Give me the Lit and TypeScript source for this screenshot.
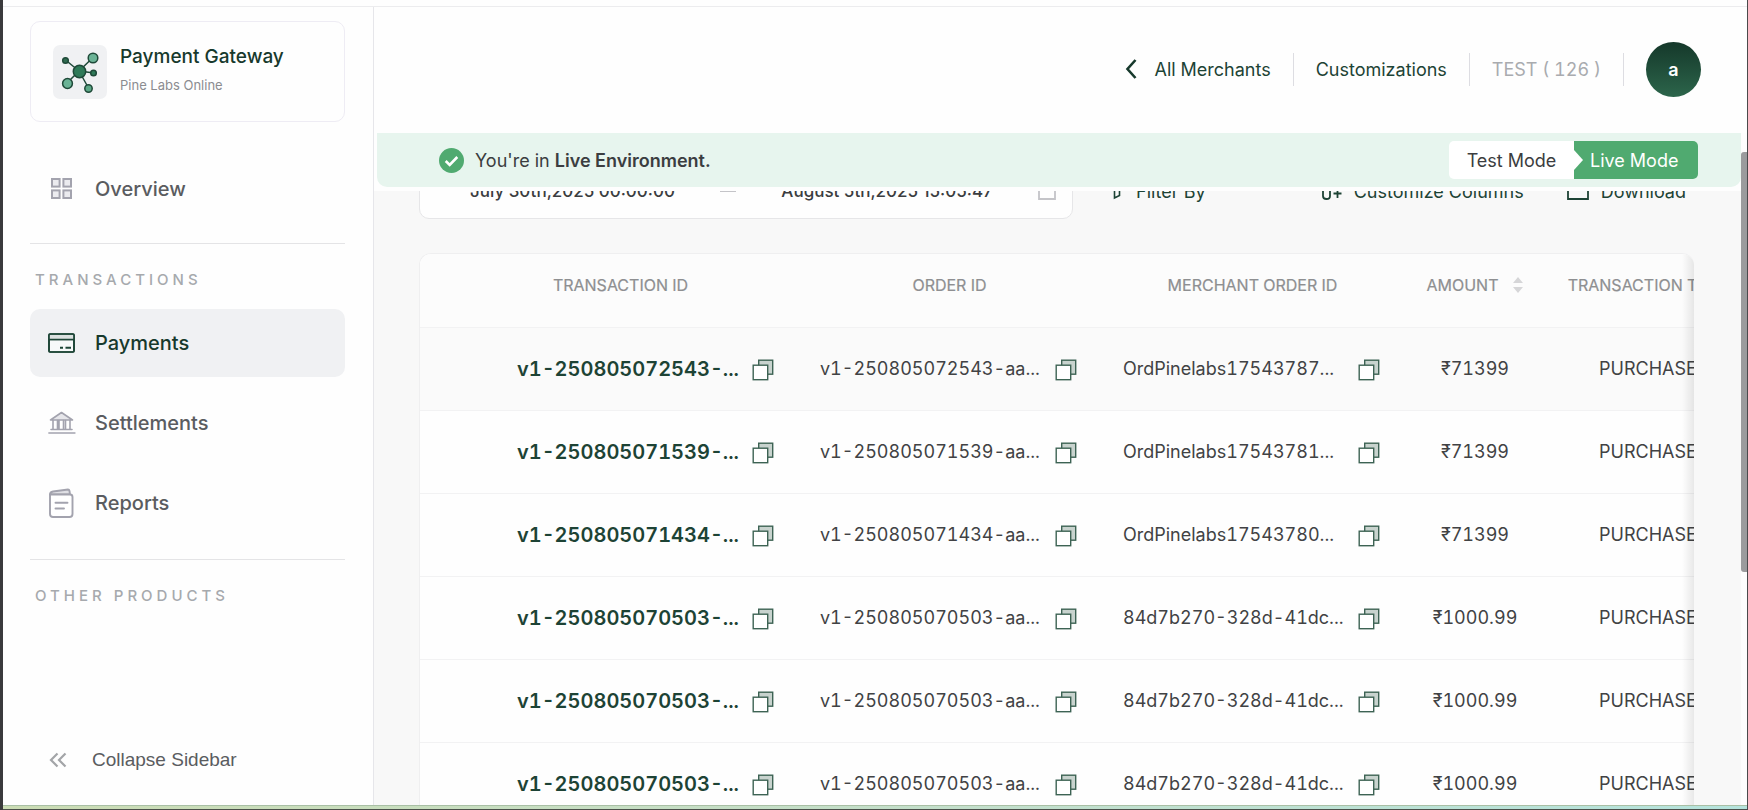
import { LitElement, html, css } from "lit";
import { customElement, state } from "lit/decorators.js";

interface Payment {
  id: string;
  order: string;
  merchantOrder: string;
  amount: string;
  type: string;
}

const PAYMENTS: Payment[] = [
  { id: "v1-250805072543-...", order: "v1-250805072543-aa...", merchantOrder: "OrdPinelabs17543787...", amount: "₹71399", type: "PURCHASE" },
  { id: "v1-250805071539-...", order: "v1-250805071539-aa...", merchantOrder: "OrdPinelabs17543781...", amount: "₹71399", type: "PURCHASE" },
  { id: "v1-250805071434-...", order: "v1-250805071434-aa...", merchantOrder: "OrdPinelabs17543780...", amount: "₹71399", type: "PURCHASE" },
  { id: "v1-250805070503-...", order: "v1-250805070503-aa...", merchantOrder: "84d7b270-328d-41dc...", amount: "₹1000.99", type: "PURCHASE" },
  { id: "v1-250805070503-...", order: "v1-250805070503-aa...", merchantOrder: "84d7b270-328d-41dc...", amount: "₹1000.99", type: "PURCHASE" },
  { id: "v1-250805070503-...", order: "v1-250805070503-aa...", merchantOrder: "84d7b270-328d-41dc...", amount: "₹1000.99", type: "PURCHASE" },
];

const reset = css`
  * { box-sizing: border-box; }
  button { font: inherit; color: inherit; background: none; border: 0; padding: 0; margin: 0; cursor: pointer; }
  a { color: inherit; text-decoration: none; }
  svg { display: block; flex: none; }
`;

const overviewIcon = html`<svg width="28" height="28" viewBox="0 0 28 28" fill="#ebebef" stroke="#a3a3ae" stroke-width="2">
  <rect x="4" y="4" width="7.600" height="7.600"/><rect x="15.400" y="4" width="7.600" height="7.600"/>
  <rect x="4" y="15.400" width="7.600" height="7.600"/><rect x="15.400" y="15.400" width="7.600" height="7.600"/></svg>`;
const cardIcon = html`<svg width="28" height="28" viewBox="0 0 28 28" fill="none" stroke="#1d4536" stroke-width="1.7">
  <rect x="1" y="5" width="25" height="18" rx="1.2" fill="#f7f9f9"/>
  <path d="M1 10.5h25v-4.500H1z" fill="#dbe1df" stroke="none"/><path d="M1 10.600h25"/><rect x="1" y="5" width="25" height="18" rx="1.2"/>
  <path d="M12 18.700h3M17.500 18.700h5.500" stroke-width="1.900"/></svg>`;
const bankIcon = html`<svg width="28" height="28" viewBox="0 0 28 28" fill="none" stroke="#a3a3ae" stroke-width="1.6" stroke-linecap="round" stroke-linejoin="round">
  <path d="M2.500 11 13.500 3.500 24.500 11z" fill="#e6e6ea"/><path d="M5 11.500v8.500M9.500 11.500v8.500M11 11.500v8.500M15.500 11.500v8.500M17.500 11.500v8.500M22 11.500v8.500M3 20.500h21M.900 24h26"/></svg>`;
const reportIcon = html`<svg width="28" height="30" viewBox="0 0 28 30" fill="none" stroke="#a3a3ae" stroke-width="1.9" stroke-linecap="round" stroke-linejoin="round">
  <path d="M2 6.500C2 4.500 3 3.800 5 3.500L20 1.500q1.200 0 1.500 1.500L22 6.500z" fill="#e0e0e5"/>
  <path d="M2 6.500H22Q24.500 6.500 24.500 9V26Q24.500 29 21.500 29H5Q2 29 2 26z" fill="#fff"/><path d="M7.500 14.800h12M7.500 20.500h8.500"/></svg>`;
const networkIcon = html`<svg width="54" height="54" viewBox="0 0 54 54" stroke="#1f4a39" stroke-width="1.5">
  <path d="M26 26 12.500 15M26 26 40 12.500M26 26l15 2M26 26 14 38M26 26l9.500 17"/>
  <circle cx="26.500" cy="26.500" r="6.200" fill="#2f7a58"/><circle cx="12.500" cy="15.500" r="2.800" fill="#2f6b50"/>
  <circle cx="40" cy="13" r="4.800" fill="#6bb396"/><circle cx="40.500" cy="28" r="2.800" fill="#2f7a58"/>
  <circle cx="14.500" cy="38.500" r="4.900" fill="#6bb396"/><circle cx="35.500" cy="43.500" r="3.700" fill="#5da887"/></svg>`;
const copyIcon = html`<svg width="22" height="22" viewBox="0 0 22 22" stroke="#3d6354" stroke-width="1.4">
  <rect x="6.700" y="1.200" width="14" height="14" fill="#c8d3ce"/><rect x="1.200" y="6.200" width="14.500" height="14.500" fill="#fff"/></svg>`;

@customElement("side-nav")
class SideNav extends LitElement {
  @state() private active = "Payments";

  static styles = [reset, css`
    :host { display: flex; flex-direction: column; padding: 14px 28px 22px 27px; border-right: 1px solid #e6e6ea; background: #fefefe; color: #5a5c60; }
    .product { display: flex; align-items: center; gap: 13px; height: 101px; padding: 0 22px; border: 1px solid #eeecf4; border-radius: 10px; }
    .tile { border-radius: 7px; background: #f0f1f3; }
    .names { display: flex; flex-direction: column; gap: 8px; padding-bottom: 6px; }
    .name { font-size: 19px; line-height: 24px; font-weight: 500; color: #17392c; white-space: nowrap; }
    .company { font-size: 13px; line-height: 16px; color: #8b8c90; }
    .overview { margin: 33px 0 20px; }
    .item { display: flex; align-items: center; gap: 19px; width: 100%; height: 68px; padding: 0 17px; border-radius: 10px; font-size: 20px; font-weight: 500; }
    .icon { display: flex; justify-content: center; width: 29px; }
    .active { background: #f0f1f3; color: #17392c; }
    .section { margin: 0; padding: 27px 5px 20px; border-top: 1px solid #e4e4e6; font-size: 15px; line-height: 18px; font-weight: 500; letter-spacing: 4px; color: #a6a9ad; }
    .group { display: flex; flex-direction: column; gap: 12px; padding-bottom: 22px; }
    .collapse { display: flex; align-items: center; gap: 24px; margin-top: auto; padding: 0 18px; font: 19px/46px "Liberation Sans", Arial, sans-serif; }
  `];

  private item(label: string, icon: unknown) {
    return html`<a href="#" class="item ${this.active === label ? "active" : ""}"
      @click=${(e: Event) => { e.preventDefault(); this.active = label; }}><span class="icon">${icon}</span>${label}</a>`;
  }

  render() {
    return html`
      <div class="product">
        <div class="tile">${networkIcon}</div>
        <div class="names"><span class="name">Payment Gateway</span><span class="company">Pine Labs Online</span></div>
      </div>
      <div class="overview">${this.item("Overview", overviewIcon)}</div>
      <h2 class="section">TRANSACTIONS</h2>
      <nav class="group">
        ${this.item("Payments", cardIcon)}
        ${this.item("Settlements", bankIcon)}
        ${this.item("Reports", reportIcon)}
      </nav>
      <h2 class="section">OTHER PRODUCTS</h2>
      <button class="collapse">
        <svg width="20" height="18" viewBox="0 0 20 18" fill="none" stroke="#a3a5a8" stroke-width="2.2"><path d="M9.500 2.500 3 9l6.500 6.500M17.500 2.500 11 9l6.500 6.500"/></svg>
        Collapse Sidebar
      </button>`;
  }
}

@customElement("payments-table")
class PaymentsTable extends LitElement {
  static styles = [reset, css`
    :host { display: block; position: relative; overflow: hidden; border: 1px solid #efeff0; border-right: 0; border-radius: 12px 12px 0 0; background: #fefefe; }
    .edge { position: absolute; inset: 0 0 0 auto; width: 12px; background: linear-gradient(to right, #0000, #00000016); }
    .table { width: 100%; min-width: 1322px; table-layout: fixed; border-collapse: collapse; font-size: 18px; font-variant-numeric: tabular-nums; color: #414244; }
    .c-id { width: 378px; }
    .c-order { width: 303px; }
    .c-amount { width: 142px; }
    .table th { height: 73px; padding: 0 0 11px; background: #fcfcfc; font-size: 16px; font-weight: 400; color: #8e8f91; -webkit-text-stroke: 0.2px; white-space: nowrap; }
    .table th:first-child { padding-left: 23px; }
    .table td { height: 83px; padding: 0; border-top: 1px solid #f2f2f3; text-align: center; white-space: nowrap; }
    .table th:last-child, .table td:last-child { padding-left: 8px; }
    .table tbody tr:first-child td { background: #fafafa; }
    .cell { display: flex; align-items: center; justify-content: space-between; padding: 0 24px 0 22px; }
    .table td:first-child .cell { padding-left: 97px; }
    .id { font-size: 20px; font-weight: 600; color: #1d4335; }
    .sort { display: inline-flex; align-items: center; gap: 13px; }
    .copy { padding-top: 2px; }
  `];

  render() {
    const copy = html`<button class="copy" aria-label="Copy">${copyIcon}</button>`;
    return html`
      <table class="table">
        <colgroup><col class="c-id"><col class="c-order"><col class="c-order"><col class="c-amount"><col></colgroup>
        <thead><tr>
          <th>TRANSACTION ID</th><th>ORDER ID</th><th>MERCHANT ORDER ID</th>
          <th><button class="sort">AMOUNT
            <svg width="12" height="18" viewBox="0 0 12 18" fill="#d6d6d8"><path d="M6 1 11 7H1zM6 17l5-6H1z"/></svg></button></th>
          <th>TRANSACTION TYPE</th>
        </tr></thead>
        <tbody>${PAYMENTS.map((p) => html`<tr>
          <td><div class="cell"><a class="id" href="#">${p.id}</a>${copy}</div></td>
          <td><div class="cell"><span>${p.order}</span>${copy}</div></td>
          <td><div class="cell"><span>${p.merchantOrder}</span>${copy}</div></td>
          <td>${p.amount}</td>
          <td>${p.type}</td>
        </tr>`)}</tbody>
      </table>
      <div class="edge"></div>`;
  }
}

@customElement("app-root")
class AppRoot extends LitElement {
  static styles = [reset, css`
    :host { display: flex; flex-direction: column; height: 100vh; overflow: hidden; border-left: 3px solid #3a3a3c; border-right: 1px solid #4a4a4c; background: #fefefe; font-family: Inter, "Liberation Sans", sans-serif; font-size: 18px; color: #3b3d40; }
    .shell { flex: 1; min-height: 0; display: grid; grid-template-columns: 371px minmax(0, 1fr); margin-top: 6px; border-top: 1px solid #ececee; }
    .strip { height: 5px; border-top: 1px solid #a9bfa5; border-bottom: 1px solid #4b4f4a; background: linear-gradient(to right, #cbdcb4, #c3dfcb 55%, #b5e3dc); }
    .main { display: flex; flex-direction: column; min-width: 0; min-height: 0; }
    .top { display: flex; align-items: center; justify-content: flex-end; height: 126px; flex: none; padding: 0 46px 2px 0; font-variant-numeric: tabular-nums; color: #1d4335; }
    .back { display: flex; align-items: center; gap: 18px; }
    .top a { padding-right: 22px; }
    .rule { align-self: center; width: 1px; height: 33px; margin-right: 22px; background: #dddde2; }
    .merchant { padding-right: 22px; color: #a9abaf; }
    .avatar { width: 55px; height: 55px; border-radius: 50%; background: linear-gradient(#15382a, #2c654b); color: #fff; font-weight: 600; }
    .body { flex: 1; min-height: 0; display: grid; grid-template-columns: minmax(0, 1fr) 6px; }
    .view { display: flex; flex-direction: column; min-height: 0; }
    .banner { display: flex; align-items: center; justify-content: space-between; flex: none; height: 54px; margin: 0 0 4px 3px; padding: 0 43px 0 62px; border-radius: 0 0 10px 10px; background: #e7f5ee; }
    .status { display: flex; align-items: center; gap: 11px; }
    .status strong { font-weight: 600; }
    .modes { display: grid; grid-template-columns: 125px 124px; height: 38px; border-radius: 5px; overflow: hidden; background: #fff; }
    .live { display: flex; align-items: center; gap: 7px; background: #50aa70; color: #fff; }
    .content { flex: 1; min-height: 0; overflow: hidden; padding: 0 47px 0 45px; background: #f8f8f8; }
    .tools { display: flex; align-items: center; margin-top: -28px; margin-bottom: 34px; padding-right: 8px; color: #1d4335; }
    .range { display: flex; align-items: center; justify-content: space-between; width: 654px; height: 56px; padding: 0 16px 0 50px; border: 1px solid #e6e6e8; border-radius: 10px; background: #fefefe; font-size: 17px; font-weight: 500; color: #3b3d40; }
    .dash { width: 16px; height: 2px; background: #c4c4c8; }
    .tool { display: flex; align-items: center; gap: 12px; }
    .actions { flex: 1; display: flex; gap: 43px; padding-left: 37px; }
    .tool:first-child { margin-right: auto; }
    .track { padding-top: 19px; background: #fdfdfd; }
    .thumb { height: 420px; border-radius: 3px 0 0 3px; background: #9b9b9d; }
  `];

  render() {
    return html`
      <div class="shell">
        <side-nav></side-nav>
        <div class="main">
          <header class="top">
            <a class="back" href="#"><svg width="12" height="20" viewBox="0 0 12 20" fill="none" stroke="#17392c" stroke-width="2.600"><path d="M10.500 1 2.500 10l8 9"/></svg>All Merchants</a>
            <span class="rule"></span>
            <a href="#">Customizations</a>
            <span class="rule"></span>
            <span class="merchant">TEST ( 126 )</span>
            <span class="rule"></span>
            <button class="avatar">a</button>
          </header>
          <div class="body">
            <div class="view">
              <div class="banner">
                <div class="status">
                  <svg width="25" height="25" viewBox="0 0 25 25"><circle cx="12.500" cy="12.500" r="12.500" fill="#50aa70"/><path d="M6.700 13l4 4 7.600-8" fill="none" stroke="#fff" stroke-width="2.600"/></svg>
                  <span>You're in <strong>Live Environment.</strong></span>
                </div>
                <div class="modes">
                  <button>Test Mode</button>
                  <button class="live"><svg width="9" height="20" viewBox="0 0 9 20"><path d="M0 0 9 10 0 20z" fill="#fff"/></svg>Live Mode</button>
                </div>
              </div>
              <div class="content">
                <div class="tools">
                  <div class="range">
                    <span>July 30th,2025 00:00:00</span><span class="dash"></span><span>August 5th,2025 15:05:47</span>
                    <svg width="18" height="18" viewBox="0 0 18 18" fill="none" stroke="#c4c4c8" stroke-width="1.800"><path d="M1 3h16v14H1zM1 7h16M5 0v4M13 0v4"/></svg>
                  </div>
                  <div class="actions">
                    <button class="tool"><svg width="14" height="18" viewBox="0 0 14 18" fill="none" stroke="#1d4335" stroke-width="1.600"><path d="M1 1h12L9.500 8v5.500L4.500 16V8z"/></svg>Filter By</button>
                    <button class="tool"><svg width="20" height="18" viewBox="0 0 20 18" fill="none" stroke="#1d4335" stroke-width="1.800"><path d="M1 1v13q0 3 3.500 3T8 14V1zM11.500 11.500h8M15.500 7.500v8.500"/></svg>Customize Columns</button>
                    <button class="tool"><svg width="22" height="18" viewBox="0 0 22 18" fill="none" stroke="#1d4335" stroke-width="1.800"><path d="M1 5v12h20V5M11 0v6M8 3l3 3 3-3"/></svg>Download</button>
                  </div>
                </div>
                <payments-table></payments-table>
              </div>
            </div>
            <div class="track"><div class="thumb"></div></div>
          </div>
        </div>
      </div>
      <div class="strip"></div>`;
  }
}
